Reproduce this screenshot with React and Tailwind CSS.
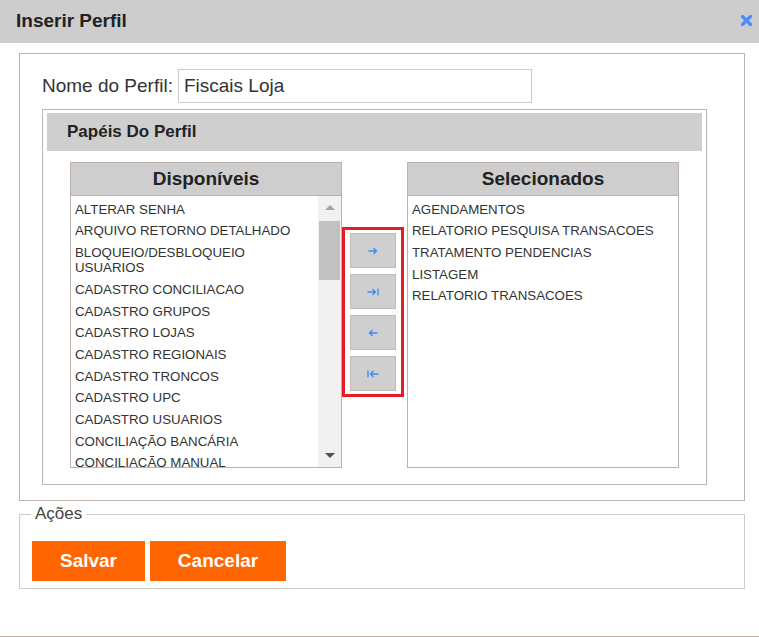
import React from "react";

const disponiveis = [
  "ALTERAR SENHA",
  "ARQUIVO RETORNO DETALHADO",
  "BLOQUEIO/DESBLOQUEIO USUARIOS",
  "CADASTRO CONCILIACAO",
  "CADASTRO GRUPOS",
  "CADASTRO LOJAS",
  "CADASTRO REGIONAIS",
  "CADASTRO TRONCOS",
  "CADASTRO UPC",
  "CADASTRO USUARIOS",
  "CONCILIAÇÃO BANCÁRIA",
  "CONCILIAÇÃO MANUAL",
];

const selecionados = [
  "AGENDAMENTOS",
  "RELATORIO PESQUISA TRANSACOES",
  "TRATAMENTO PENDENCIAS",
  "LISTAGEM",
  "RELATORIO TRANSACOES",
];

// small blue arrows used on the move buttons
const arrows = {
  right: "M1.5 4h8 M6.5 1l3 3-3 3",
  rightAll: "M0.5 4h8 M5.5 1l3 3-3 3 M11 0.5v7",
  left: "M10.5 4h-8 M5.5 1l-3 3 3 3",
  leftAll: "M1 0.5v7 M11.5 4h-8 M6.5 1l-3 3 3 3",
};

function MoveButton({ d }) {
  return (
    <button className="w-[46px] h-[35px] mx-auto flex items-center justify-center bg-[#cfcfcf] border border-[#c3b9b2]">
      <svg width="12" height="8" viewBox="0 0 12 8" fill="none" stroke="#3d8af7" strokeWidth="1.3">
        <path d={d} />
      </svg>
    </button>
  );
}

function ListBox({ title, items, scroll }) {
  return (
    <div className="w-[272px] border border-[#bdb1aa] bg-white">
      <div className="h-[33px] bg-[#cecece] border-b border-[#bdb1aa] flex items-center justify-center text-[19px] font-bold text-[#222]">
        {title}
      </div>
      <div className="h-[271px] flex">
        <div className="flex-1 overflow-hidden pl-[4px] pt-[2.5px]">
          {items.map((item) => (
            <div key={item} className="text-[13.3px] leading-[15.3px] py-[3.2px] text-[#333]">
              {item}
            </div>
          ))}
        </div>
        {scroll && (
          <div className="w-[23px] bg-[#f1f1f1] flex flex-col">
            <div className="h-[23px] flex items-center justify-center">
              <div className="w-0 h-0 border-l-[5px] border-r-[5px] border-b-[5px] border-l-transparent border-r-transparent border-b-[#a3a3a3]" />
            </div>
            <div className="h-[59px] mx-[1px] mt-[2px] bg-[#c1c1c1]" />
            <div className="flex-1" />
            <div className="h-[23px] flex items-center justify-center">
              <div className="w-0 h-0 border-l-[5px] border-r-[5px] border-t-[5px] border-l-transparent border-r-transparent border-t-[#505050]" />
            </div>
          </div>
        )}
      </div>
    </div>
  );
}

export default function App() {
  return (
    <div className="w-[759px] h-[637px] bg-white border-b border-[#bfb3ac] font-['Liberation_Sans',Arial,sans-serif] text-[#333]">
      <div className="h-[43px] bg-[#cdcdcd] flex items-center justify-between pl-[16px] pr-[7px]">
        <h1 className="text-[19px] font-bold text-[#222]">Inserir Perfil</h1>
        <svg width="11" height="11" viewBox="0 0 11 11" className="mt-[-2px]">
          <path d="M1.5 1.5l8 8 M9.5 1.5l-8 8" stroke="#4a8cf6" strokeWidth="3.2" strokeLinecap="round" />
        </svg>
      </div>

      <div className="ml-[19px] mt-[10px] w-[726px] h-[448px] border border-[#bfb3ac] pl-[22px] pt-[15px]">
        <div className="flex items-center gap-[5px]">
          <label className="text-[19px]">Nome do Perfil:</label>
          <input
            className="w-[354px] h-[34px] border border-[#cccccc] px-[5px] text-[19px] text-[#333] outline-none"
            defaultValue="Fiscais Loja"
          />
        </div>

        <div className="mt-[6px] w-[665px] h-[376px] border border-[#bfb3ac] pl-[4px] pt-[3px]">
          <div className="w-[655px] h-[38px] bg-[#cfcfcf] flex items-center pl-[20px] text-[17px] font-bold text-[#222]">
            Papéis Do Perfil
          </div>
          <div className="flex items-start mt-[11px] pl-[23px]">
            <ListBox title="Disponíveis" items={disponiveis} scroll />
            <div className="mt-[65px] w-[62px] h-[170px] border-[3px] border-[#e51c23] pt-[3px] flex flex-col gap-[6px]">
              <MoveButton d={arrows.right} />
              <MoveButton d={arrows.rightAll} />
              <MoveButton d={arrows.left} />
              <MoveButton d={arrows.leftAll} />
            </div>
            <div className="ml-[3px]">
              <ListBox title="Selecionados" items={selecionados} />
            </div>
          </div>
        </div>
      </div>

      <fieldset className="ml-[19px] mt-[3px] w-[726px] border border-[#cccccc] pl-[12px] pb-[7px]">
        <legend className="ml-[-1px] px-[4px] text-[17px] leading-[20px] text-[#444]">Ações</legend>
        <div className="flex gap-[5px] mt-[17px]">
          <button className="w-[113px] h-[40px] bg-[#ff6600] text-white text-[19px] font-bold">Salvar</button>
          <button className="w-[136px] h-[40px] bg-[#ff6600] text-white text-[19px] font-bold">Cancelar</button>
        </div>
      </fieldset>
    </div>
  );
}
